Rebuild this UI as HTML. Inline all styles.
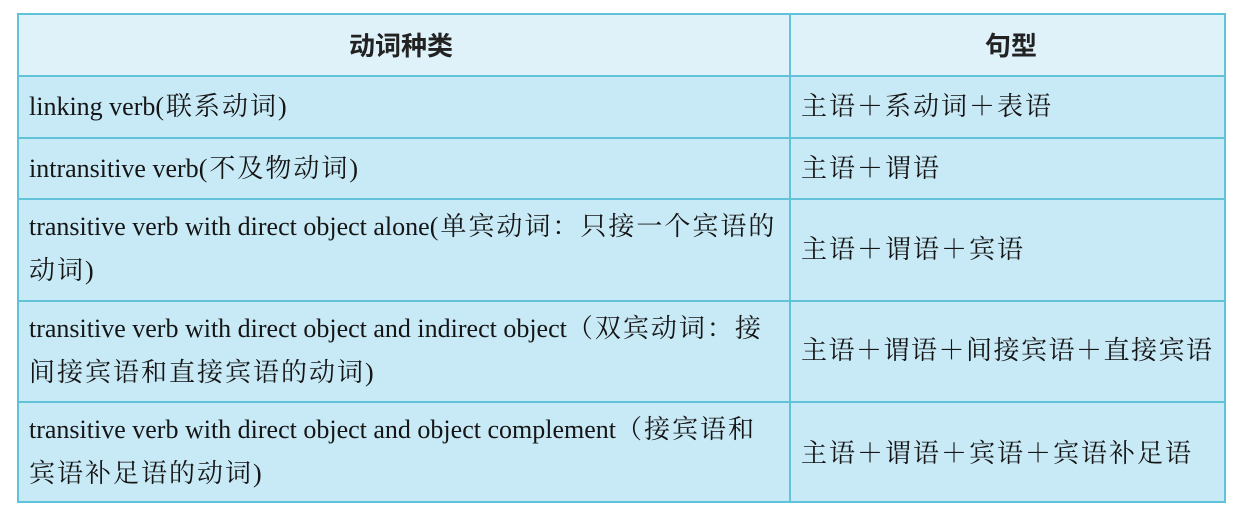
<!DOCTYPE html>
<html><head><meta charset="utf-8"><style>
body{margin:0;width:1240px;height:510px;background:#fff;position:relative;overflow:hidden;font-family:"Liberation Serif","Noto Serif CJK SC",serif;color:#151515}
.t{position:absolute;left:17px;top:13px;width:1209px;height:490px;background:#c8e9f6;border:2px solid #5fc3d9;box-sizing:border-box}
.h{position:absolute;left:0;top:0;width:100%;height:62px;background:#dff2f9}
.hl{position:absolute;left:0;width:100%;height:2px;background:#62c2d8}
.vl{position:absolute;top:0;left:770px;width:2px;height:100%;background:#62c2d8}
.c{position:absolute;font-size:26px;line-height:40px;white-space:nowrap}
.z{letter-spacing:2px}
.hd{position:absolute;font-family:"Noto Sans CJK SC",sans-serif;font-size:26px;font-weight:bold;top:11px;color:#222}
</style></head><body>
<div class="t">
<div class="h"></div>
<div class="hl" style="top:60px"></div>
<div class="hl" style="top:122px"></div>
<div class="hl" style="top:183px"></div>
<div class="hl" style="top:285px"></div>
<div class="hl" style="top:386px"></div>
<div class="vl"></div>
<div class="hd" style="left:330px">动词种类</div>
<div class="hd" style="left:966px">句型</div>
<div class="c" style="left:10px;top:72px">linking verb<span class="z">(联系动词)</span></div>
<div class="c" style="left:10px;top:134px">intransitive verb<span class="z">(不及物动词)</span></div>
<div class="c" style="left:10px;top:190px;line-height:44px">transitive verb with direct object alone<span class="z">(单宾动词：只接一个宾语的</span><br><span class="z">动词)</span></div>
<div class="c" style="left:10px;top:292px;line-height:44px">transitive verb with direct object and indirect object<span class="z">（双宾动词：接</span><br><span class="z">间接宾语和直接宾语的动词)</span></div>
<div class="c" style="left:10px;top:393px;line-height:44px">transitive verb with direct object and object complement<span class="z">（接宾语和</span><br><span class="z">宾语补足语的动词)</span></div>
<div class="c z" style="left:782px;top:72px">主语＋系动词＋表语</div>
<div class="c z" style="left:782px;top:134px">主语＋谓语</div>
<div class="c z" style="left:782px;top:215px">主语＋谓语＋宾语</div>
<div class="c z" style="left:782px;top:316px;letter-spacing:1.5px">主语＋谓语＋间接宾语＋直接宾语</div>
<div class="c z" style="left:782px;top:419px">主语＋谓语＋宾语＋宾语补足语</div>
</div>
</body></html>
